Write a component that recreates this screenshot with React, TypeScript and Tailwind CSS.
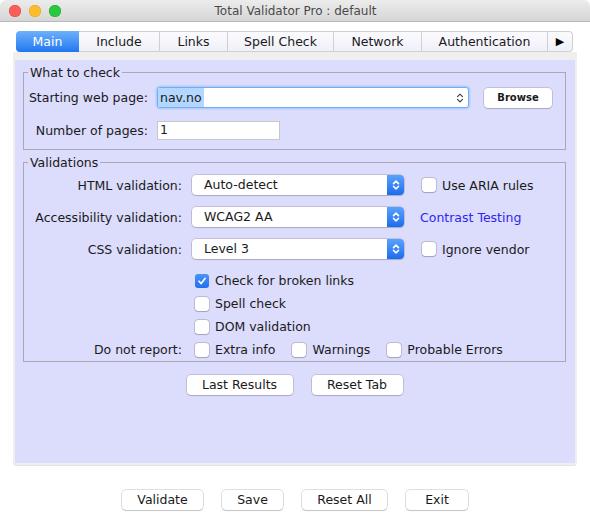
import type { ReactNode } from 'react'

const tabs = [
  { label: 'Main', w: 'w-[63px]', active: true },
  { label: 'Include', w: 'w-[81px]' },
  { label: 'Links', w: 'w-[68px]' },
  { label: 'Spell Check', w: 'w-[106px]' },
  { label: 'Network', w: 'w-[88px]' },
  { label: 'Authentication', w: 'w-[126px]' },
]

const Chevrons = ({ color, width = 1.4 }: { color: string; width?: number }) => (
  <svg width="8" height="12" viewBox="0 0 8 12">
    <path
      d="M1.5 4.6L4 2.1L6.5 4.6M1.5 7.4L4 9.9L6.5 7.4"
      fill="none"
      stroke={color}
      strokeWidth={width}
      strokeLinecap="round"
      strokeLinejoin="round"
    />
  </svg>
)

const Checkbox = ({ checked = false }: { checked?: boolean }) =>
  checked ? (
    <span className="flex h-[14px] w-[14px] shrink-0 items-center justify-center rounded-[3px] bg-gradient-to-b from-[#4a93f8] to-[#1f6ff0]">
      <svg width="10" height="10" viewBox="0 0 10 10">
        <path d="M2 5.2L4.2 7.6L8.2 2.3" fill="none" stroke="white" strokeWidth="1.6" strokeLinecap="round" strokeLinejoin="round" />
      </svg>
    </span>
  ) : (
    <span className="h-[14px] w-[14px] shrink-0 rounded-[3px] bg-white shadow-[0_0_0_0.5px_rgba(0,0,0,0.28),0_0.5px_1px_rgba(0,0,0,0.15)]" />
  )

const CheckItem = ({ label, checked }: { label: string; checked?: boolean }) => (
  <span className="flex items-center gap-[6px]">
    <Checkbox checked={checked} />
    <span className="pt-[2px]">{label}</span>
  </span>
)

const Button = ({ children, w }: { children: ReactNode; w: string }) => (
  <button
    className={`${w} flex h-[20px] items-center justify-center rounded-[4px] bg-white text-[12.5px] text-[#1a1a1a] shadow-[0_0_0_0.5px_rgba(0,0,0,0.25),0_1px_1px_rgba(0,0,0,0.12)]`}
  >
    {children}
  </button>
)

const Select = ({ value }: { value: string }) => (
  <div className="flex h-[20px] w-[212px] items-center rounded-[4px] bg-white shadow-[0_0_0_0.5px_rgba(0,0,0,0.25),0_1px_1px_rgba(0,0,0,0.12)]">
    <span className="flex-1 pl-[12px] pt-[1px]">{value}</span>
    <span className="flex h-full w-[17px] items-center justify-center rounded-r-[4px] bg-gradient-to-b from-[#5aa2fa] to-[#1a6cf0]">
      <Chevrons color="white" width={1.5} />
    </span>
  </div>
)

const SelectRow = ({ label, value, children }: { label: string; value: string; children: ReactNode }) => (
  <div className="flex h-[20px] items-center">
    <span className="w-[168px] pr-[10px] pt-[2px] text-right">{label}</span>
    <Select value={value} />
    {children}
  </div>
)

export default function App() {
  return (
    <div className="flex h-[526px] w-[590px] flex-col overflow-hidden rounded-t-[6px] bg-white font-['DejaVu_Sans',sans-serif] text-[12.5px] text-[#1a1a1a]">
      <div className="relative flex h-[22px] shrink-0 items-center border-b border-[#b9b9b9] bg-gradient-to-b from-[#ececec] to-[#d6d6d6]">
        <div className="flex gap-[8px] pl-[9px]">
          <span className="h-[12px] w-[12px] rounded-full bg-[#fc5f57] shadow-[inset_0_0_0_0.5px_#e0443e]" />
          <span className="h-[12px] w-[12px] rounded-full bg-[#fdbc2e] shadow-[inset_0_0_0_0.5px_#dea123]" />
          <span className="h-[12px] w-[12px] rounded-full bg-[#28c840] shadow-[inset_0_0_0_0.5px_#1aab29]" />
        </div>
        <span className="flex-1 pr-[60px] text-center text-[12px] text-[#4a4a4a]">Total Validator Pro : default</span>
      </div>

      <div className="px-[13px] pt-[9px]">
        <div className="flex pl-[3px]">
          {tabs.map((t) =>
            t.active ? (
              <div
                key={t.label}
                className={`${t.w} flex h-[21px] items-center justify-center rounded-l-[4px] bg-gradient-to-b from-[#6db1fb] to-[#1f76f1] pt-[2px] text-white`}
              >
                {t.label}
              </div>
            ) : (
              <div
                key={t.label}
                className={`${t.w} flex h-[21px] items-center justify-center border-y border-r border-[#cfcfd6] bg-gradient-to-b from-[#fbfbfe] to-[#f0f0f8] pt-[2px]`}
              >
                {t.label}
              </div>
            )
          )}
          <div className="flex h-[21px] w-[25px] items-center justify-center rounded-r-[4px] border-y border-r border-[#cfcfd6] bg-gradient-to-b from-[#fbfbfe] to-[#f0f0f8] pt-[1px] text-[11px] text-black">
            ▶
          </div>
        </div>

        <div className="rounded-b-[4px] bg-[#efefef] px-[2px] pb-[2px] pt-[8px] shadow-[0_1px_0_#e2e2e2]">
          <div className="h-[403px] bg-[#dcdcfc] pl-[8px] pr-[9px] pt-[5px]">
            <fieldset className="border border-[#a9a9b4] pb-[9px]">
              <legend className="ml-[4px] px-[2px] leading-[15px]">What to check</legend>
              <div className="mt-[7px] flex h-[21px] items-center">
                <span className="w-[133px] pr-[9px] pt-[2px] text-right">Starting web page:</span>
                <div className="flex h-[21px] w-[312px] items-center rounded-[3px] border border-[#74abf4] bg-white shadow-[0_0_0_1.5px_#b0d0fa]">
                  <span className="flex h-full flex-1 items-center">
                    <span className="flex h-[19px] items-center bg-[#b3d7ff] px-[2px] pt-[1px]">nav.no</span>
                  </span>
                  <span className="flex h-full w-[17px] items-center justify-center">
                    <Chevrons color="#3a3a3a" width={1.1} />
                  </span>
                </div>
                <div className="ml-[15px]">
                  <button className="flex h-[20px] w-[68px] items-center justify-center rounded-[4px] bg-white text-[10px] font-bold text-[#1a1a1a] shadow-[0_0_0_0.5px_rgba(0,0,0,0.25),0_1px_1px_rgba(0,0,0,0.12)]">
                    Browse
                  </button>
                </div>
              </div>
              <div className="mt-[12px] flex h-[20px] items-center">
                <span className="w-[133px] pr-[9px] pt-[2px] text-right">Number of pages:</span>
                <div className="flex h-[19px] w-[123px] items-center border border-[#c6c6cc] bg-white pl-[2px] pt-[1px]">1</div>
              </div>
            </fieldset>

            <fieldset className="mt-[5px] border border-[#a9a9b4]">
              <legend className="ml-[4px] px-[2px] leading-[15px]">Validations</legend>
              <div className="mt-[5px] flex flex-col gap-[12px]">
                <SelectRow label="HTML validation:" value="Auto-detect">
                  <span className="ml-[18px]">
                    <CheckItem label="Use ARIA rules" />
                  </span>
                </SelectRow>
                <SelectRow label="Accessibility validation:" value="WCAG2 AA">
                  <span className="ml-[16px] pt-[2px] text-[#2d27f2]">Contrast Testing</span>
                </SelectRow>
                <SelectRow label="CSS validation:" value="Level 3">
                  <span className="ml-[18px]">
                    <CheckItem label="Ignore vendor" />
                  </span>
                </SelectRow>
              </div>
              <div className="mt-[10px] flex flex-col">
                <div className="flex h-[23px] items-center pl-[171px]">
                  <CheckItem label="Check for broken links" checked />
                </div>
                <div className="flex h-[23px] items-center pl-[171px]">
                  <CheckItem label="Spell check" />
                </div>
                <div className="flex h-[23px] items-center pl-[171px]">
                  <CheckItem label="DOM validation" />
                </div>
                <div className="flex h-[23px] items-center">
                  <span className="w-[168px] pr-[10px] pt-[2px] text-right">Do not report:</span>
                  <div className="ml-[3px] flex items-center gap-[17px]">
                    <CheckItem label="Extra info" />
                    <CheckItem label="Warnings" />
                    <CheckItem label="Probable Errors" />
                  </div>
                </div>
              </div>
            </fieldset>

            <div className="mt-[13px] flex justify-center gap-[19px]">
              <Button w="w-[106px]">Last Results</Button>
              <Button w="w-[91px]">Reset Tab</Button>
            </div>
          </div>
        </div>
      </div>

      <div className="mt-[25px] flex justify-center gap-[19px]">
        <Button w="w-[81px]">Validate</Button>
        <Button w="w-[61px]">Save</Button>
        <Button w="w-[85px]">Reset All</Button>
        <Button w="w-[62px]">Exit</Button>
      </div>
    </div>
  )
}
